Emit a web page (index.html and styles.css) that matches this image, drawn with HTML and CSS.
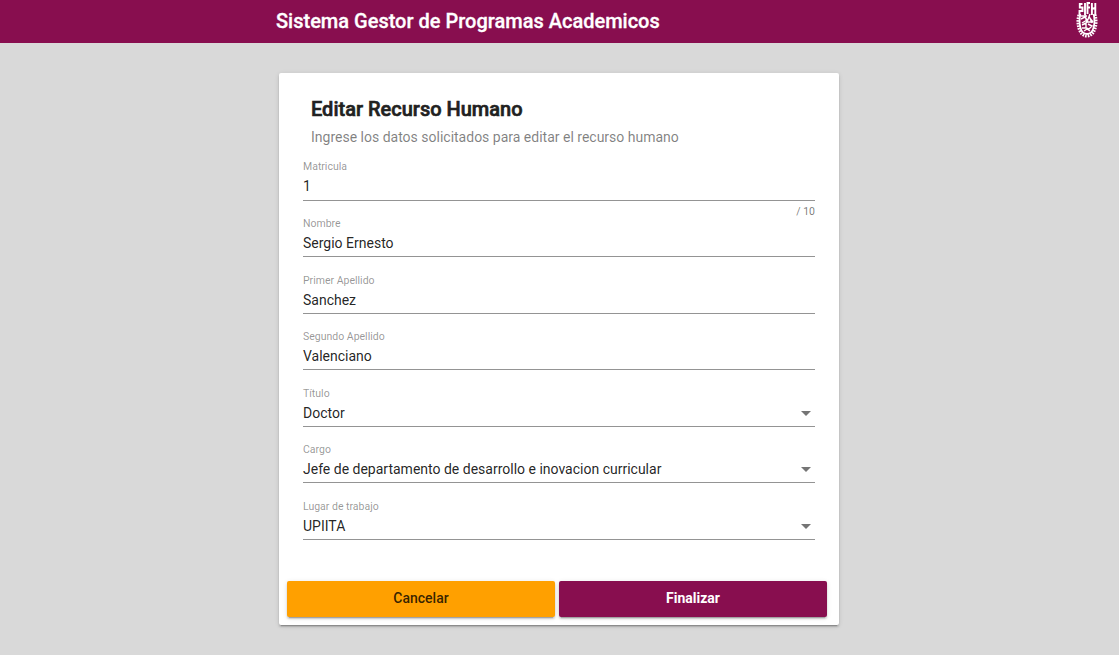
FILE: index.html
```html
<!DOCTYPE html>
<html lang="es">
<head>
<meta charset="utf-8">
<title>Sistema Gestor de Programas Academicos</title>
<link rel="stylesheet" href="styles.css">
</head>
<body>
<header class="toolbar">
  <h1 class="toolbar-title">Sistema Gestor de Programas Academicos</h1>
  <svg class="logo" viewBox="0 0 22 38" width="22" height="38" aria-label="IPN">
    <g fill="none" stroke="#fff">
      <path d="M6.500 3H3.800v3.500h2.700V10H3.500v4M9 2v12M14 2h-2.500V13M11.500 6.500H14M15.900 14V2M19.300 2v12M15.900 7l3.400 1" stroke-width="1.900"/>
      <path d="M3 14C0.500 22 3 35 11 35s10.500-13 8-21" stroke-width="3.200" stroke-dasharray="1.600 1"/>
      <path d="M4.300 13C2.500 22 4 33 11 33s8.500-11 6.700-20" stroke-width="1.800"/>
      <path d="M5 15h6M5 18l4-2 2 3-5 3M9 14l2 8M13 15l3 7M14 13l-3 8h6M6 24l4-2v5H6M12 23l4 2-3 3-3-1M8 30l3-2 3 2M13 16l4 5" stroke-width="1.400"/>
    </g>
  </svg>
</header>
<main class="card">
  <div class="card-header">
    <h2 class="card-title">Editar Recurso Humano</h2>
    <p class="card-subtitle">Ingrese los datos solicitados para editar el recurso humano</p>
  </div>
  <form class="fields">
    <div class="field"><label class="label">Matricula</label><div class="value">1</div><div class="hint">/ 10</div></div>
    <div class="field"><label class="label">Nombre</label><div class="value">Sergio Ernesto</div></div>
    <div class="field"><label class="label">Primer Apellido</label><div class="value">Sanchez</div></div>
    <div class="field"><label class="label">Segundo Apellido</label><div class="value">Valenciano</div></div>
    <div class="field"><label class="label">Título</label><div class="value">Doctor<span class="arrow"></span></div></div>
    <div class="field"><label class="label">Cargo</label><div class="value">Jefe de departamento de desarrollo e inovacion curricular<span class="arrow"></span></div></div>
    <div class="field"><label class="label">Lugar de trabajo</label><div class="value">UPIITA<span class="arrow"></span></div></div>
  </form>
  <div class="actions">
    <button class="button cancel" type="button">Cancelar</button>
    <button class="button finish" type="button">Finalizar</button>
  </div>
</main>
</body>
</html>
```
FILE: styles.css
```css
* { box-sizing: border-box; }
body {
  margin: 0;
  height: 655px;
  overflow: hidden;
  background: #d9d9d9;
  color: rgba(0, 0, 0, .87);
  font-family: Roboto, sans-serif;
}
.toolbar {
  display: flex;
  justify-content: space-between;
  height: 43px;
  padding: 0 21px 0 276px;
  background: #880e4f;
  color: #fff;
}
.toolbar-title {
  margin: 0;
  font-size: 20px;
  font-weight: 500;
  line-height: 42px;
  -webkit-text-stroke: .3px currentColor;
}
.logo { margin-top: 1px; }
.card {
  display: flex;
  flex-direction: column;
  width: 560px;
  height: 552px;
  margin: 30px 0 0 279px;
  padding: 24px 8px 8px;
  border-radius: 2px;
  background: #fff;
  box-shadow: 0 3px 1px -2px rgba(0, 0, 0, .2), 0 2px 2px rgba(0, 0, 0, .14), 0 1px 5px rgba(0, 0, 0, .12);
}
.card-header { padding-left: 24px; height: 63.400px; }
.card-title {
  margin: 0;
  color: #212121;
  font-size: 20px;
  font-weight: 500;
  line-height: 24px;
  -webkit-text-stroke: .6px currentColor;
}
.card-subtitle {
  margin: 6px 0 0;
  color: rgba(0, 0, 0, .5);
  font-size: 14px;
  line-height: 20px;
}
.fields { padding: 0 16px; }
.field { height: 56.590px; }
.label {
  display: block;
  color: rgba(0, 0, 0, .42);
  font-size: 10.500px;
  line-height: 13px;
}
.value {
  display: flex;
  justify-content: space-between;
  height: 27.130px;
  padding-top: 3px;
  border-bottom: 1px solid #949494;
  font-size: 14px;
  line-height: 20px;
}
.arrow {
  width: 0;
  height: 0;
  margin: 8px 4px 0 0;
  border: 5px solid transparent;
  border-top-color: #757575;
  border-bottom: 0;
}
.hint {
  padding-top: 4.400px;
  color: rgba(0, 0, 0, .54);
  font-size: 10.500px;
  line-height: 13px;
  text-align: right;
}
.actions {
  display: flex;
  gap: 4px;
  margin-top: auto;
  padding-right: 4px;
}
.button {
  flex: 1;
  height: 36px;
  padding: 0 0 2px;
  border: 0;
  border-radius: 2px;
  font: 500 14px Roboto, sans-serif;
  box-shadow: 0 3px 1px -2px rgba(0, 0, 0, .2), 0 2px 2px rgba(0, 0, 0, .14), 0 1px 5px rgba(0, 0, 0, .12);
}
.cancel { background: #ffa000; color: rgba(0, 0, 0, .8); }
.finish { background: #880e4f; color: #fff; font-weight: 700; }
```
